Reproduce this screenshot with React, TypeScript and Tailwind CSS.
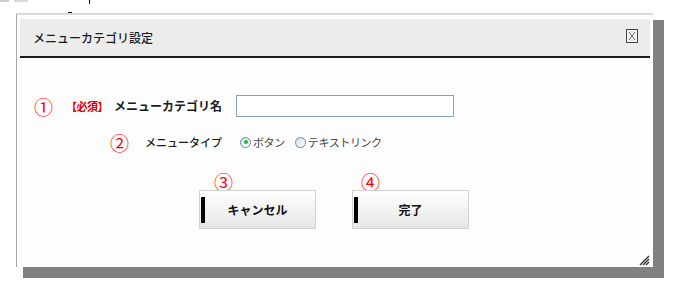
import React from 'react';

const font = { fontFamily: '"Noto Sans CJK JP", "Liberation Sans", sans-serif' };

function Radio({ checked }: { checked?: boolean }) {
  return (
    <span className="flex h-[11px] w-[11px] items-center justify-center rounded-full border border-[#6f8aa6] bg-gradient-to-br from-[#d9dee4] to-white">
      {checked && <span className="h-[4px] w-[4px] rounded-full bg-[#2fb140]" />}
    </span>
  );
}

function ActionButton({ num, label, numOffset }: { num: string; label: string; numOffset: string }) {
  return (
    <div className="flex flex-col">
      <span className={`h-[17px] text-[19px] leading-[17px] text-[#ff0000] ${numOffset}`}>{num}</span>
      <button className="relative flex h-[39px] w-[117px] items-center justify-center border border-[#d2d2d2] bg-gradient-to-b from-white to-[#e6e6e6] text-[12px] font-bold text-[#111]">
        <span className="absolute left-[1px] top-[6px] h-[26px] w-[4px] bg-black" />
        {label}
      </button>
    </div>
  );
}

export default function App() {
  return (
    <div className="relative h-[281px] w-[680px] overflow-hidden bg-white" style={font}>
      {/* bits of the page behind the dialog */}
      <span className="absolute left-0 top-0 h-[2px] w-[9px] bg-[#cfc8dc]" />
      <span className="absolute left-[14px] top-0 h-[2px] w-[14px] bg-[#dcd6e6]" />
      <span className="absolute left-[89px] top-0 h-[4px] w-[1px] bg-black" />
      <span className="absolute left-[68px] top-[12px] h-[2px] w-[4px] bg-black" />

      <div className="pl-[16px] pt-[13px]">
        <div className="relative flex h-[254px] w-[637px] flex-col border-l border-t-2 border-l-[#a6a6a6] border-t-[#d9d9d9] bg-[#fdfdfd] px-[3px] pt-[4px] shadow-[9px_9px_0_2px_#808080]">
          {/* header */}
          <div className="flex h-[39px] items-center justify-between border-b-2 border-[#1a1a1a] bg-[#ececec] pl-[13px] pr-[12px]">
            <span className="text-[12px] font-medium text-[#1a1a1a]">メニューカテゴリ設定</span>
            <span className="-mt-[4px] flex h-[14px] w-[12px] items-center justify-center border border-[#444] bg-[#f2f2f2]">
              <svg width="8" height="10" viewBox="0 0 8 10">
                <path d="M1 1 L7 9 M7 1 L1 9" stroke="#666" strokeWidth="1" fill="none" />
              </svg>
            </span>
          </div>

          {/* body */}
          <div className="flex flex-col pt-[37px]">
            <div className="flex h-[22px] items-center">
              <div className="flex w-[202px] items-center justify-end">
                <span className="mr-[13px] text-[19px] leading-none text-[#ff0000]">①</span>
                <span className="mr-[6px] text-[11px] font-bold tracking-[-0.5px] text-[#e00000]">【必須】</span>
                <span className="text-[12px] font-bold text-[#1a1a1a]">メニューカテゴリ名</span>
              </div>
              <input
                type="text"
                className="ml-[14px] h-[22px] w-[218px] border border-[#86a2bd] bg-white outline-none"
              />
            </div>

            <div className="mt-[17px] flex h-[16px] items-center">
              <div className="flex w-[202px] items-center justify-end">
                <span className="mr-[16px] text-[19px] leading-none text-[#ff0000]">②</span>
                <span className="text-[11px] font-medium text-[#1a1a1a]">メニュータイプ</span>
              </div>
              <div className="ml-[18px] flex items-center text-[11px] tracking-[-0.4px] text-[#444]">
                <Radio checked />
                <span className="ml-[2px]">ボタン</span>
                <span className="ml-[10px]">
                  <Radio />
                </span>
                <span className="ml-[2px]">テキストリンク</span>
              </div>
            </div>

            <div className="mt-[23px] flex justify-center gap-[36px] pr-[2px]">
              <ActionButton num="③" label="キャンセル" numOffset="ml-[15px]" />
              <ActionButton num="④" label="完了" numOffset="ml-[9px]" />
            </div>
          </div>

          {/* resize grip */}
          <svg className="absolute bottom-[1px] right-[3px]" width="11" height="12" viewBox="0 0 11 12">
            <path d="M1 11 L10 2 M4 11 L10 5 M7 11 L10 8" stroke="#333" strokeWidth="1.4" fill="none" />
          </svg>
        </div>
      </div>
    </div>
  );
}
